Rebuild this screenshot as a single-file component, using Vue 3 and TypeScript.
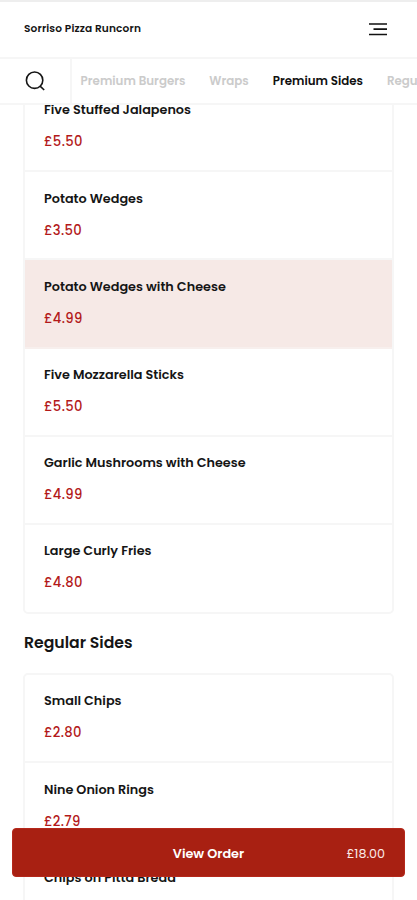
<script setup lang="ts">
interface Tab {
  label: string
  active?: boolean
}

interface Item {
  name: string
  price: string
  selected?: boolean
}

interface Section {
  title?: string
  items: Item[]
}

const tabs: Tab[] = [
  { label: 'Premium Burgers' },
  { label: 'Wraps' },
  { label: 'Premium Sides', active: true },
  { label: 'Regular Sides' },
]

const sections: Section[] = [
  {
    items: [
      { name: 'Five Stuffed Jalapenos', price: '£5.50' },
      { name: 'Potato Wedges', price: '£3.50' },
      { name: 'Potato Wedges with Cheese', price: '£4.99', selected: true },
      { name: 'Five Mozzarella Sticks', price: '£5.50' },
      { name: 'Garlic Mushrooms with Cheese', price: '£4.99' },
      { name: 'Large Curly Fries', price: '£4.80' },
    ],
  },
  {
    title: 'Regular Sides',
    items: [
      { name: 'Small Chips', price: '£2.80' },
      { name: 'Nine Onion Rings', price: '£2.79' },
      { name: 'Chips on Pitta Bread', price: '£2.99' },
    ],
  },
]
</script>

<template>
  <div class="screen">
    <header class="top">
      <span class="brand">Sorriso Pizza Runcorn</span>
      <svg class="menu" viewBox="0 0 18 14"><path d="M0 2h18M4.5 7.2h13.5M0 12.5h18" /></svg>
    </header>
    <nav class="nav">
      <div class="search">
        <svg viewBox="0 0 20 20"><circle cx="9.6" cy="9.2" r="8.2" /><path d="M14.8 14.8 19.2 19" /></svg>
      </div>
      <div class="tabs">
        <span v-for="tab in tabs" :key="tab.label" class="tab" :class="{ active: tab.active }">{{ tab.label }}</span>
      </div>
    </nav>
    <main class="list">
      <section v-for="(section, index) in sections" :key="index">
        <h2 v-if="section.title">{{ section.title }}</h2>
        <ul class="card">
          <li v-for="item in section.items" :key="item.name" :class="{ selected: item.selected }">
            <div class="name">{{ item.name }}</div>
            <div class="price">{{ item.price }}</div>
          </li>
        </ul>
      </section>
    </main>
    <button class="order">
      <span></span>
      <span class="label">View Order</span>
      <span class="total">£18.00</span>
    </button>
  </div>
</template>

<style>
body {
  background: #fff;
}
</style>

<style scoped>
.screen {
  position: relative;
  height: 900px;
  overflow: hidden;
  display: flex;
  flex-direction: column;
  font-family: Poppins, Inter, sans-serif;
  color: #151515;
}
.top {
  box-sizing: border-box;
  flex: none;
  height: 59px;
  border-top: 2px solid #eee;
  border-bottom: 2px solid #f6f6f6;
  display: flex;
  align-items: center;
  justify-content: space-between;
  padding: 0 30px 2px 24px;
}
.brand {
  font-size: 10.6px;
  font-weight: 600;
  letter-spacing: 0.13px;
}
.menu {
  width: 18px;
  height: 14px;
  margin-top: 1px;
  fill: none;
  stroke: #111;
  stroke-width: 1.7;
}
.nav {
  box-sizing: border-box;
  flex: none;
  height: 46px;
  border-bottom: 2px solid #f6f6f6;
  display: flex;
}
.search {
  box-sizing: border-box;
  flex: none;
  width: 72px;
  border-right: 2px solid #f6f6f6;
  padding: 12px 0 0 25px;
}
.search svg {
  display: block;
  width: 20px;
  height: 20px;
  fill: none;
  stroke: #151515;
  stroke-width: 1.6;
}
.tabs {
  display: flex;
  align-items: center;
  gap: 23.9px;
  padding-left: 8.6px;
  overflow: hidden;
  white-space: nowrap;
}
.tab {
  font-size: 11.85px;
  font-weight: 600;
  color: #cbcbcb;
}
.tab.active {
  color: #111;
}
.list {
  flex: 1;
  min-height: 0;
  overflow: hidden;
  padding: 0 23px;
}
.list section:first-child {
  margin-top: -23px;
}
.card {
  list-style: none;
  margin: 0;
  padding: 0;
  border: 2px solid #f6f6f6;
  border-radius: 5px;
}
li {
  box-sizing: border-box;
  height: 88.2px;
  padding: 16.4px 0 0 19px;
  border-bottom: 2px solid #f6f6f6;
}
li:last-child {
  border-bottom: 0;
  height: 87px;
}
.selected {
  background: #f6e9e6;
  border-bottom-color: #f7efed;
}
.name {
  font-size: 12.8px;
  font-weight: 600;
  line-height: 20px;
}
.price {
  margin-top: 12px;
  font-size: 13.2px;
  font-weight: 500;
  line-height: 20px;
  letter-spacing: 0.35px;
  color: #b3191a;
}
h2 {
  margin: 15px 0 17px 1px;
  font-size: 15.7px;
  font-weight: 600;
  line-height: 27px;
}
.order {
  position: absolute;
  left: 12px;
  right: 12px;
  top: 828px;
  height: 49px;
  border: 1px solid #b5281b;
  border-radius: 4px;
  padding: 2px 19px 0 0;
  background: #a82012;
  color: #fff;
  font-family: inherit;
  display: grid;
  grid-template-columns: 1fr auto 1fr;
  align-items: center;
}
.label {
  padding-left: 19px;
  font-size: 12.8px;
  font-weight: 600;
}
.total {
  justify-self: end;
  font-size: 12.7px;
  font-weight: 400;
  color: #fbeae8;
}
</style>
